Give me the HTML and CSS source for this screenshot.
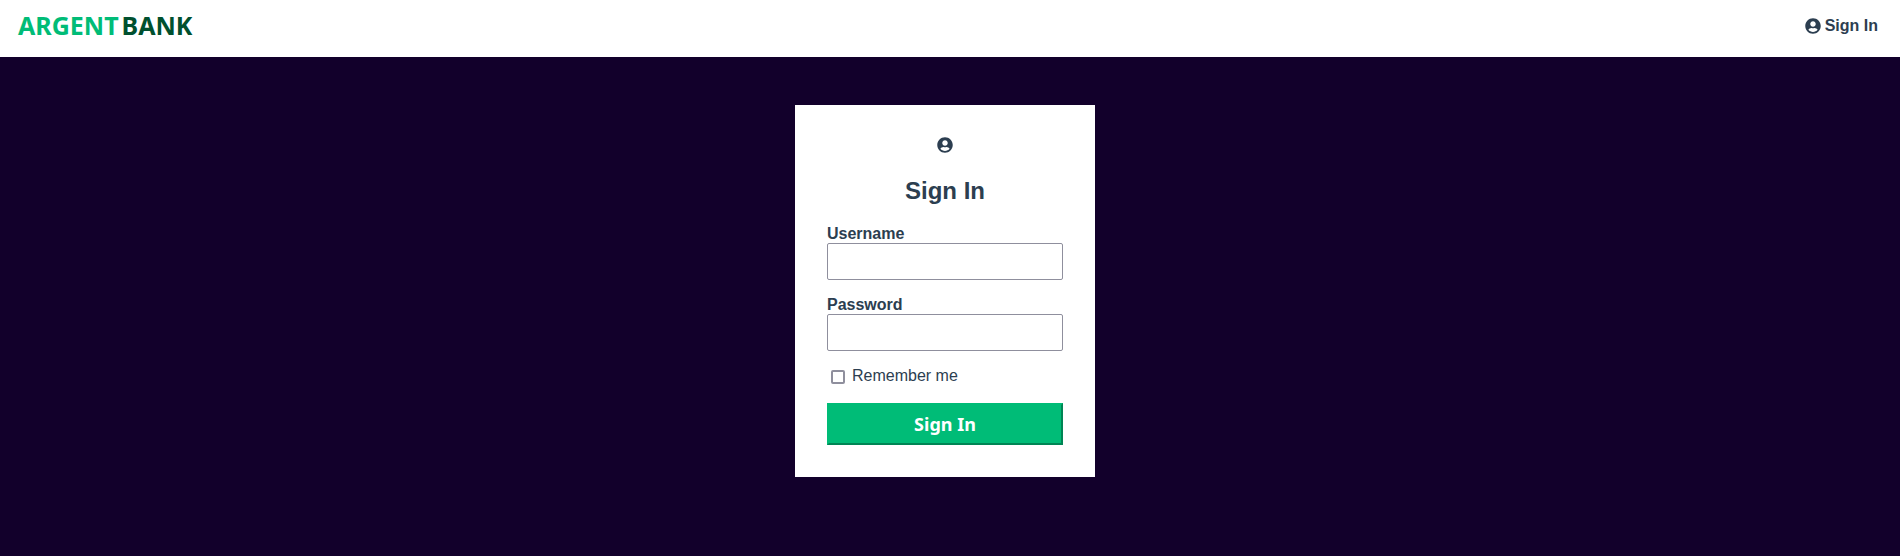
FILE: index.html
```html
<!DOCTYPE html>
<html lang="en">
<head>
<meta charset="utf-8">
<meta name="viewport" content="width=device-width, initial-scale=1">
<title>Argent Bank - Sign In</title>
<link rel="stylesheet" href="styles.css">
</head>
<body>
<nav class="main-nav">
  <a class="main-nav-logo" href="#"><span class="logo-argent">ARGENT</span><span class="logo-bank">BANK</span></a>
  <a class="main-nav-item" href="#">
    <svg class="user-icon" viewBox="0 0 496 512" aria-hidden="true"><path fill="currentColor" d="M248 8C111 8 0 119 0 256s111 248 248 248 248-111 248-248S385 8 248 8zm0 96c48.600 0 88 39.400 88 88s-39.400 88-88 88-88-39.400-88-88 39.400-88 88-88zm0 344c-58.700 0-111.300-26.600-146.500-68.200 18.800-35.400 55.600-59.800 98.500-59.800 2.400 0 4.800.4 7.100 1.100 13 4.200 26.600 6.900 40.900 6.900 14.300 0 28-2.700 40.900-6.900 2.300-.7 4.700-1.100 7.100-1.100 42.900 0 79.700 24.400 98.500 59.800C359.300 421.400 306.700 448 248 448z"/></svg>
    <span>Sign In</span>
  </a>
</nav>
<main class="main">
  <section class="sign-in-content">
    <svg class="user-icon" viewBox="0 0 496 512" aria-hidden="true"><path fill="currentColor" d="M248 8C111 8 0 119 0 256s111 248 248 248 248-111 248-248S385 8 248 8zm0 96c48.600 0 88 39.400 88 88s-39.400 88-88 88-88-39.400-88-88 39.400-88 88-88zm0 344c-58.700 0-111.300-26.600-146.500-68.200 18.800-35.400 55.600-59.800 98.500-59.800 2.400 0 4.800.4 7.100 1.100 13 4.200 26.600 6.900 40.900 6.900 14.300 0 28-2.700 40.900-6.900 2.300-.7 4.700-1.100 7.100-1.100 42.900 0 79.700 24.400 98.500 59.800C359.300 421.400 306.700 448 248 448z"/></svg>
    <h1 class="title">Sign In</h1>
    <form class="form">
      <div class="input-wrapper">
        <label for="username">Username</label>
        <input type="text" id="username">
      </div>
      <div class="input-wrapper">
        <label for="password">Password</label>
        <input type="password" id="password">
      </div>
      <div class="input-remember">
        <input type="checkbox" id="remember-me">
        <label for="remember-me">Remember me</label>
      </div>
      <button class="sign-in-button" type="button">Sign In</button>
    </form>
  </section>
</main>
</body>
</html>
```
FILE: styles.css
```css
* {
  box-sizing: border-box;
}

body {
  display: flex;
  flex-direction: column;
  min-height: 100vh;
  margin: 0;
  color: #2c3e50;
  background: #fff;
  font: 16px/18px "Liberation Sans", Arial, sans-serif;
}

.main-nav {
  display: flex;
  justify-content: space-between;
  align-items: flex-start;
  padding: 7px 22px 14px 18px;
}

.main-nav-logo {
  display: flex;
  gap: 3px;
  font: bold 25px/36px "Noto Sans", sans-serif;
  text-decoration: none;
}

.logo-argent {
  color: #00bc77;
}

.logo-bank {
  color: #00502f;
}

.main-nav-item {
  display: flex;
  align-items: center;
  gap: 4px;
  padding-top: 10px;
  color: #2c3e50;
  font-weight: bold;
  text-decoration: none;
}

.user-icon {
  display: block;
  width: 16px;
  height: 16px;
}

.main {
  flex: 1;
  padding: 48px 10px 48px 0;
  background: #12002b;
}

.sign-in-content {
  display: flex;
  flex-direction: column;
  align-items: center;
  width: 300px;
  margin: 0 auto;
  padding: 32px;
  background: #fff;
}

.title {
  margin: 24px 0 20px;
  font-size: 24px;
  line-height: 28px;
}

.form {
  display: flex;
  flex-direction: column;
  gap: 16px;
  align-self: stretch;
}

.input-wrapper {
  display: flex;
  flex-direction: column;
}

.input-wrapper label {
  font-weight: bold;
}

.input-wrapper input {
  height: 37px;
  padding: 5px;
  border: 1px solid #8f8f9d;
  border-radius: 2px;
  background: #fff;
  font-size: 19px;
}

.input-remember {
  display: flex;
  align-items: center;
  gap: 7px;
  padding-left: 4px;
}

.input-remember input {
  appearance: none;
  width: 14px;
  height: 14px;
  margin: 2px 0 0;
  border: 2px solid #8f8f9d;
  border-radius: 2px;
  background: #fff;
}

.input-remember input:checked {
  background: #00bc77;
}

.sign-in-button {
  height: 42px;
  margin-top: 2px;
  padding: 0 8px;
  border: 2px solid;
  border-color: #00bc77 #008554 #008554 #00bc77;
  color: #fff;
  background: #00bc77;
  font: bold 18px/24px "Noto Sans", sans-serif;
}
```
